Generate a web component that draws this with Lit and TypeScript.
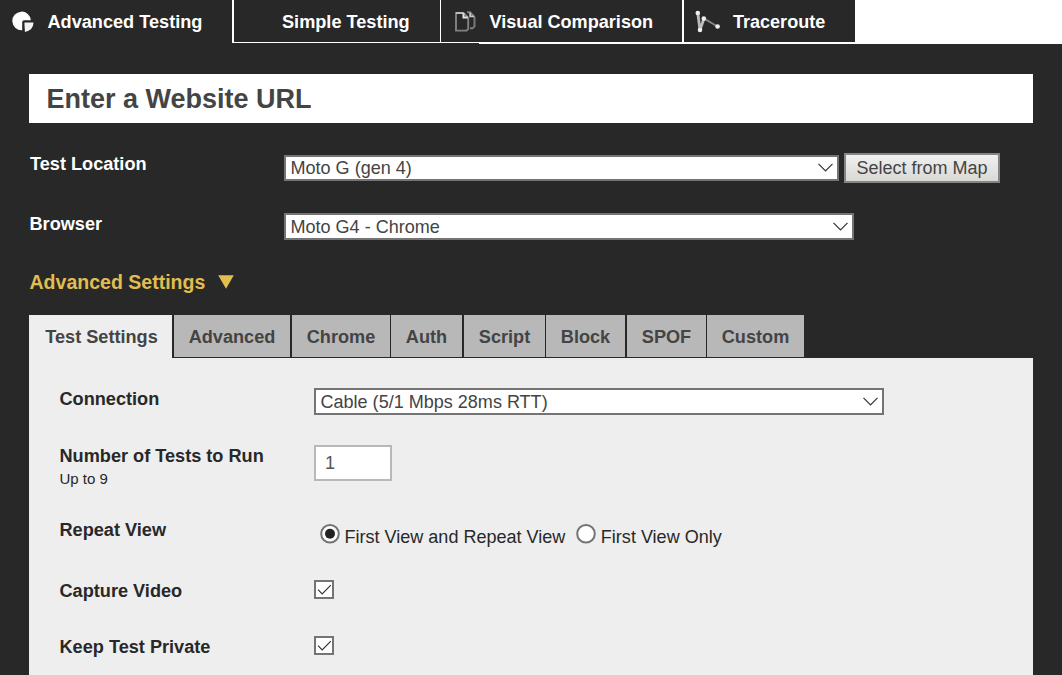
import { LitElement, html, css, svg } from "lit";
import { customElement, property } from "lit/decorators.js";

@customElement("select-box")
class SelectBox extends LitElement {
  @property() value = "";
  static styles = css`
    :host {
      display: flex;
      box-sizing: border-box;
      align-items: center;
      justify-content: space-between;
      height: 27px;
      border: 2px solid #747474;
      background: #fff;
      color: #444;
      padding: 0 4px 0 4.5px;
      white-space: nowrap;
      line-height: 23px;
      font-size: 18.05px;
    }
    .arrow {
      display: block;
      margin-bottom: 1px;
    }
  `;
  render() {
    return html`<span>${this.value}</span>
      <svg class="arrow" width="15" height="9" viewBox="0 0 15 9">
        <path d="M.5 .8 7.5 7.8 14.5 .8" fill="none" stroke="#333" stroke-width="1.2" />
      </svg>`;
  }
}

@customElement("check-box")
class CheckBox extends LitElement {
  static styles = css`
    :host {
      display: block;
      box-sizing: border-box;
      width: 20px;
      height: 19px;
      border: 2px solid #747474;
      background: #fff;
    }
    .mark {
      display: block;
    }
  `;
  render() {
    return html`<svg class="mark" width="16" height="15" viewBox="0 0 16 15">
      <path d="M2 7.6 6.2 11.8 14.8 3.2" fill="none" stroke="#333" stroke-width="1.2" />
    </svg>`;
  }
}

const pieIcon = html`<svg width="24" height="24" viewBox="0 0 24 24">
  <path d="M10.2 12.2V20.2A9.3 9.3 0 1 1 18.9 10.3H12.2Q10.2 10.3 10.2 12.2Z" fill="#fff" />
  <path d="M12.4 12.6H21.5Q21.2 20.6 12.9 22Z" fill="#f4f4f4" />
</svg>`;

const pagesIcon = html`<svg width="24" height="24" viewBox="0 0 24 24">
  <path d="M14 2.3H17L21.5 6.8V16.3L19.5 18.3H17" fill="none" stroke="#7c7c7c" stroke-width="1.9" />
  <path d="M17.2 2.6V6.4H21" fill="none" stroke="#c8c8c8" stroke-width="1.8" />
  <path d="M3 3H10.5L15.2 7.7V19L13.5 20.6H3Z" fill="#282828" stroke="#828282" stroke-width="1.9" />
  <path d="M3 3H10.5" stroke="#c8c8c8" stroke-width="1.7" />
  <path d="M10.5 3.2V7.4H14.8" fill="none" stroke="#e4e4e4" stroke-width="2" />
</svg>`;

const routeIcon = html`<svg width="26" height="24" viewBox="0 0 26 24">
  <path d="M2.8 3 5 20 9 8.5" fill="none" stroke="#bbb" stroke-width="2.8" />
  <path d="M9 8.5 22.5 16.5" fill="none" stroke="#888" stroke-width="2" />
  ${[
    [2.8, 3],
    [5, 20],
    [8.8, 8.6],
    [22.6, 16.5],
  ].map(([x, y]) => svg`<circle cx=${x} cy=${y} r="2.3" fill="#eee" />`)}
</svg>`;

@customElement("app-root")
class AppRoot extends LitElement {
  static styles = css`
    :host {
      display: block;
      box-sizing: border-box;
      width: 1062px;
      height: 675px;
      overflow: hidden;
      background: #282828;
      color: #fff;
      font: 18.15px/20px "Liberation Sans", Arial, sans-serif;
      white-space: nowrap;
    }
    svg {
      display: block;
    }
    .nav {
      display: flex;
      height: 44px;
      font-weight: bold;
      background: linear-gradient(#fff 0 0) 479px 0 / 583px 44px no-repeat, linear-gradient(#fff 0 0) 232px 0 / 247px 43px no-repeat, #282828;
    }
    .navtab {
      display: flex;
      box-sizing: border-box;
      align-items: center;
      height: 42px;
      background: #282828;
      padding-top: 1px;
    }
    .n1 { width: 232px; height: 44px; padding: 0 0 1px 12px; gap: 11.5px; margin-right: 2px; }
    .n2 { width: 206px; padding-left: 48px; margin-right: 1px; }
    .n3 { width: 241px; padding-left: 12px; gap: 12.5px; margin-right: 2px; font-size: 18.1px; }
    .n4 { width: 171px; padding-left: 11px; gap: 12px; font-size: 18.05px; }
    .main {
      padding: 30px 29px 0;
    }
    .url {
      height: 49px;
      background: #fff;
      color: #444;
      font-size: 27px;
      font-weight: bold;
      line-height: 51px;
      padding-left: 17.5px;
      box-sizing: border-box;
    }
    .row {
      display: grid;
      grid-template-columns: 255px auto;
      justify-content: start;
      align-items: start;
    }
    .label {
      font-weight: bold;
    }
    .loc { height: 60px; padding-top: 30px; box-sizing: border-box; }
    .loc .label { padding: 1px 0 0 1px; }
    .loc-controls { display: flex; gap: 5px; align-items: center; }
    .loc select-box { width: 555px; height: 26px; }
    .map {
      box-sizing: border-box;
      width: 156px;
      height: 30px;
      border: 2px solid #858585;
      background: linear-gradient(#f0f0f0, #d9d8d5);
      color: #444;
      line-height: 26px;
      text-align: center;
      padding: 0;
      font-family: inherit;
      font-size: 18px;
    }
    .browser { height: 88px; padding-top: 30px; box-sizing: border-box; }
    .browser .label { padding: 1px 0 0 0.5px; }
    .browser select-box { width: 570px; line-height: 24px; }
    .adv {
      display: flex;
      align-items: center;
      gap: 13px;
      height: 44px;
      box-sizing: border-box;
      padding-bottom: 23px;
      padding-left: 0.5px;
      color: #e0be50;
      font-weight: bold;
      font-size: 19.55px;
    }
    .tabs {
      display: flex;
      height: 43px;
      color: #444;
      font-weight: bold;
    }
    .tab {
      height: 42px;
      line-height: 45px;
      background: #b8b8b8;
      text-align: center;
    }
    .tab.on {
      height: 43px;
      background: #eee;
      text-indent: 2px;
    }
    .panel {
      height: 317px;
      box-sizing: border-box;
      background: #eee;
      color: #282828;
      padding: 30px 30px 0;
    }
    .panel .label { padding: 1px 0 0 0.5px; }
    .conn { height: 57px; }
    .conn select-box { width: 570px; line-height: 24px; }
    .count { height: 75px; }
    .small { font-size: 15px; font-weight: normal; line-height: 18px; padding-top: 4px; }
    .num {
      box-sizing: border-box;
      width: 78px;
      height: 36px;
      border: 2px solid #b8b8b8;
      background: #fff;
      color: #555;
      line-height: 33px;
      padding-left: 9px;
    }
    .view { height: 60px; }
    .panel .view .label { padding-top: 0; }
    .radios { display: flex; padding: 4px 0 0 6px; font-size: 18.05px; }
    .radio {
      display: flex;
      gap: 4.5px;
      margin-right: 11px;
    }
    .radio span { padding-top: 3px; }
    .check { height: 56px; }
  `;

  private radio(label: string, on: boolean) {
    return html`<div class="radio">
      <svg width="20" height="20" viewBox="0 0 20 20">
        <circle cx="10" cy="9.8" r="8.8" fill="#fff" stroke="#747474" stroke-width="2" />
        ${on ? svg`<circle cx="10" cy="9.8" r="5" fill="#222" />` : ""}
      </svg>
      <span>${label}</span>
    </div>`;
  }

  render() {
    const tabs: [string, number, number][] = [
      ["Test Settings", 143, 2],
      ["Advanced", 116, 2],
      ["Chrome", 98, 1],
      ["Auth", 71, 2],
      ["Script", 81, 1],
      ["Block", 79, 2],
      ["SPOF", 79, 1],
      ["Custom", 97, 0],
    ];
    return html`
      <div class="nav">
        <div class="navtab n1">${pieIcon}<span>Advanced Testing</span></div>
        <div class="navtab n2"><span>Simple Testing</span></div>
        <div class="navtab n3">${pagesIcon}<span>Visual Comparison</span></div>
        <div class="navtab n4">${routeIcon}<span>Traceroute</span></div>
      </div>
      <div class="main">
        <div class="url">Enter a Website URL</div>
        <div class="row loc">
          <div class="label">Test Location</div>
          <div class="loc-controls">
            <select-box value="Moto G (gen 4)"></select-box>
            <button class="map">Select from Map</button>
          </div>
        </div>
        <div class="row browser">
          <div class="label">Browser</div>
          <select-box value="Moto G4 - Chrome"></select-box>
        </div>
        <div class="adv">
          <span>Advanced Settings</span>
          <svg width="16" height="14" viewBox="0 0 16 14"><path d="M.2 .3H15.8L8 13.8Z" fill="#e0be50" /></svg>
        </div>
        <div class="tabs">
          ${tabs.map(
            ([t, w, gap], i) =>
              html`<div class="tab ${i === 0 ? "on" : ""}" style="width:${w}px;margin-right:${gap}px">${t}</div>`
          )}
        </div>
        <div class="panel">
          <div class="row conn">
            <div class="label">Connection</div>
            <select-box value="Cable (5/1 Mbps 28ms RTT)"></select-box>
          </div>
          <div class="row count">
            <div class="label">Number of Tests to Run<div class="small">Up to 9</div></div>
            <div class="num">1</div>
          </div>
          <div class="row view">
            <div class="label">Repeat View</div>
            <div class="radios">${this.radio("First View and Repeat View", true)}${this.radio("First View Only", false)}</div>
          </div>
          <div class="row check">
            <div class="label">Capture Video</div>
            <check-box></check-box>
          </div>
          <div class="row check">
            <div class="label">Keep Test Private</div>
            <check-box></check-box>
          </div>
        </div>
      </div>
    `;
  }
}
